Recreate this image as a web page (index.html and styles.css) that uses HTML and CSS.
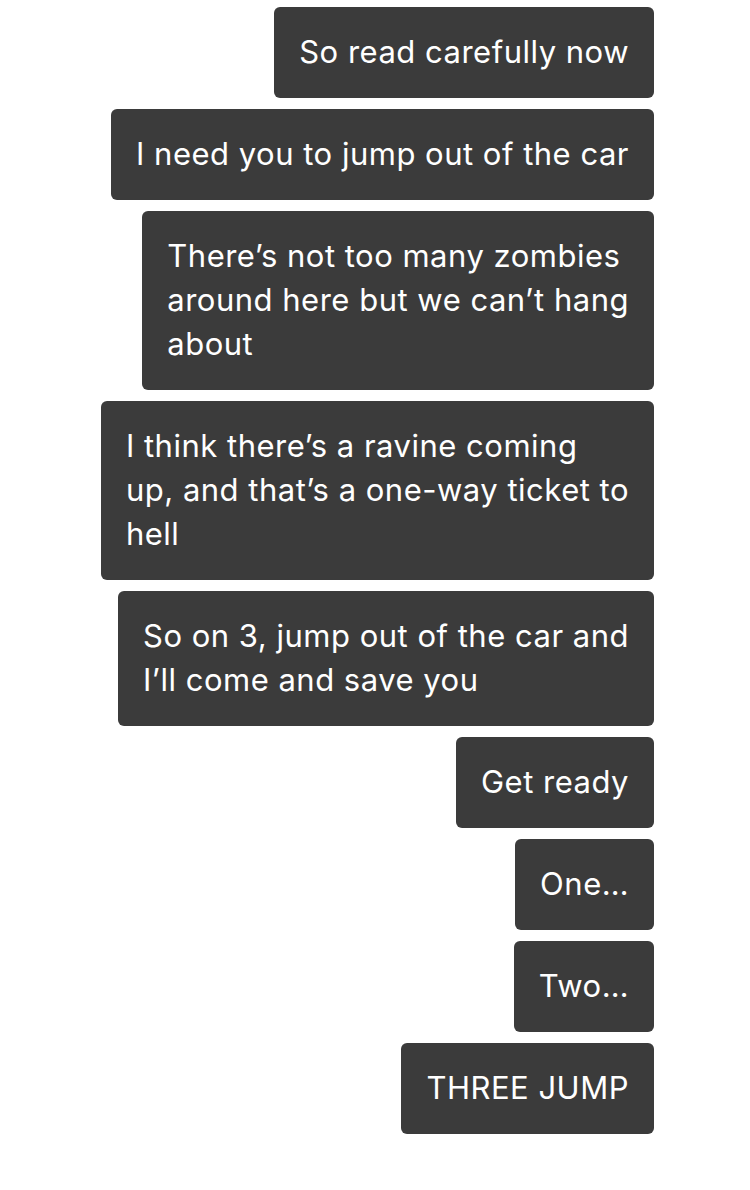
FILE: index.html
```html
<!DOCTYPE html>
<html lang="en">
<head>
  <meta charset="UTF-8">
  <meta name="viewport" content="width=device-width, initial-scale=1.0">
  <title>Chat</title>
  <link rel="stylesheet" href="styles.css">
</head>
<body>

<div class="thread">
  <div class="bubble">So read carefully now</div>
  <div class="bubble">I need you to jump out of the car</div>
  <div class="bubble">There’s not too many zombies<br>around here but we can’t hang<br>about</div>
  <div class="bubble">I think there’s a ravine coming<br>up, and that’s a one-way ticket to<br>hell</div>
  <div class="bubble">So on 3, jump out of the car and<br>I’ll come and save you</div>
  <div class="bubble">Get ready</div>
  <div class="bubble">One…</div>
  <div class="bubble">Two…</div>
  <div class="bubble">THREE JUMP</div>
</div>

</body>
</html>
```

FILE: styles.css
```css
body {
  margin: 0;
  padding: 0;
  background-color: #fff;
  font-family: Inter, 'Noto Sans', sans-serif;
}

.thread {
  display: flex;
  flex-direction: column;
  align-items: flex-end;
  gap: 11px;
  padding: 7px 96px 0 0;
}

.bubble {
  background-color: #3b3b3b;
  color: #fff;
  font-size: 31px;
  letter-spacing: 0.5px;
  line-height: 44px;
  padding: 23px 25px 24px 25px;
  border-radius: 6px;
  white-space: nowrap;
}
```
